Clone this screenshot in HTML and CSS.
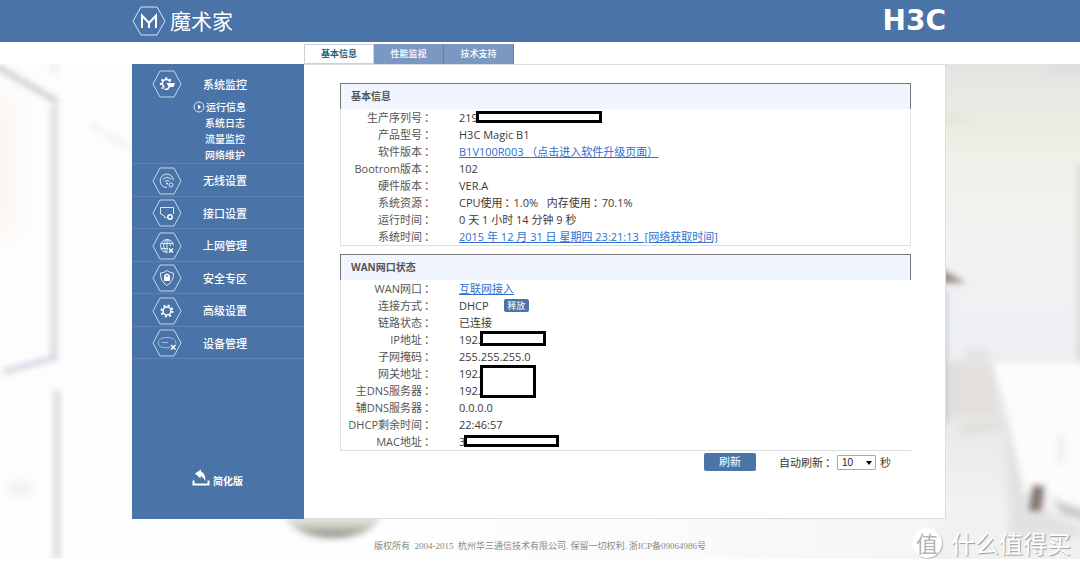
FILE: index.html
```
<!DOCTYPE html>
<html lang="zh-CN">
<head>
<meta charset="utf-8">
<title>魔术家</title>
<link rel="stylesheet" href="styles.css">
</head>
<body>
<header class="top">
  <div class="wrap top-row">
    <a class="brand" href="#">
      <svg class="brand-mark" viewBox="0 0 34 30" aria-hidden="true">
        <path class="thin" d="M1 15 9 1H25L33 15 25 29H9Z"/>
        <path class="bold" d="M10 22V9.500L17 17 24 9.500V22M17 17V22"/>
      </svg>
      <span class="brand-name">魔术家</span>
    </a>
    <span class="vendor">H3C</span>
  </div>
</header>

<nav class="wrap tabs">
  <a class="tab active" href="#">基本信息</a>
  <a class="tab" href="#">性能监视</a>
  <a class="tab" href="#">技术支持</a>
</nav>

<div class="stage">
  <svg class="scene" viewBox="0 0 1080 495" preserveAspectRatio="none" aria-hidden="true">
    <defs>
      <linearGradient id="wall" x1="0" y1="0" x2="0" y2="1">
        <stop offset="0" stop-color="#e3e4e2"/>
        <stop offset="0.080" stop-color="#e9e9e4"/>
        <stop offset="0.120" stop-color="#ecebdf"/>
        <stop offset="0.220" stop-color="#f1f0ea"/>
        <stop offset="0.400" stop-color="#f2f2f2"/>
        <stop offset="0.600" stop-color="#eff0f4"/>
        <stop offset="0.780" stop-color="#e9e9ea"/>
        <stop offset="0.900" stop-color="#eeeeee"/>
        <stop offset="1" stop-color="#f4f4f4"/>
      </linearGradient>
      <linearGradient id="floor" x1="0" y1="0" x2="1" y2="0">
        <stop offset="0" stop-color="#fefefe"/>
        <stop offset="0.400" stop-color="#fbfbfb"/>
        <stop offset="1" stop-color="#f3f3f3"/>
      </linearGradient>
      <linearGradient id="bowl" x1="0" y1="0" x2="0" y2="1">
        <stop offset="0.500" stop-color="#efefea"/>
        <stop offset="0.720" stop-color="#d4d4cc"/>
        <stop offset="1" stop-color="#85857d"/>
      </linearGradient>
      <filter id="b2" x="-50%" y="-50%" width="200%" height="200%"><feGaussianBlur stdDeviation="2"/></filter>
      <filter id="b3" x="-50%" y="-50%" width="200%" height="200%"><feGaussianBlur stdDeviation="3"/></filter>
      <filter id="b4" x="-50%" y="-50%" width="200%" height="200%"><feGaussianBlur stdDeviation="4"/></filter>
      <filter id="b12" x="-100%" y="-100%" width="300%" height="300%"><feGaussianBlur stdDeviation="12"/></filter>
    </defs>
    <rect width="1080" height="495" fill="#fdfdfd"/>
    <rect x="-10" y="30" width="22" height="140" fill="#fdf1e9" filter="url(#b12)"/>
    <g filter="url(#b3)">
      <path d="M54 42V294M57 326V495" fill="none" stroke="#d6d6d6" stroke-width="6"/>
      <path d="M-4 2 20 16 58 38" fill="none" stroke="#c6c8c8" stroke-width="5"/>
      <path d="M3 308 58 293" fill="none" stroke="#d0d3df" stroke-width="5"/>
      <path d="M90 60 134 86" fill="none" stroke="#f3f3f3" stroke-width="6"/>
      <path d="M54 -2V10" fill="none" stroke="#eeeeee" stroke-width="7"/>
    </g>
    <rect x="8" y="418" width="24" height="14" fill="#f3f3f3" filter="url(#b4)"/>
    <rect x="340" y="455" width="740" height="40" fill="url(#floor)"/>
    <ellipse cx="333" cy="450" rx="48" ry="24" fill="url(#bowl)" filter="url(#b3)"/>
    <rect x="945" width="135" height="455" fill="url(#wall)"/>
    <g filter="url(#b4)">
      <path d="M944 450H1090V500H920Z" fill="#f1f1f1"/>
      <ellipse cx="1070" cy="4" rx="26" ry="6" fill="#dcdedd"/>
      <ellipse cx="955" cy="56" rx="20" ry="3" fill="#e4e3d6"/>
      <path d="M940 298H992L1001 352H940Z" fill="#e2dfdc"/>
      <rect x="966" y="284" width="22" height="24" fill="#e5e3e1"/>
      <path d="M960 360 1001 356V366L962 372Z" fill="#e0dfd9"/>
      <path d="M1003 350 1030 440 1080 462V475H1010Z" fill="#e2e2e2"/>
    </g>
    <g filter="url(#b3)">
      <path d="M940 204 966 219 940 219Z" fill="#958e88"/>
      <path d="M944 228V360" stroke="#b9c4d0" stroke-width="5"/>
      <path d="M1080 100V298" stroke="#d0ceca" stroke-width="4"/>
      <path d="M994 299H1090V448L1048 428 1025 428Q1016 380 994 299Z" fill="#fcfcfc"/>
      <path d="M1061 370V400" stroke="#f1f1ef" stroke-width="8"/>
      <path d="M1054 436 1090 448V458L1062 450Z" fill="#cacac8"/>
      <path d="M1032 421H1045L1041 447H1029Z" fill="#84776f"/>
    </g>
  </svg>

  <div class="wrap shell">
    <aside class="side">
      <div class="group">
        <a class="item" href="#">
          <svg class="hex" viewBox="0 0 30 28" aria-hidden="true">
            <path class="frame" d="M1 14 8 1H22L29 14 22 27H8Z"/>
            <path class="line2" d="M12.500 17A4 4 0 1 1 18 12"/>
            <path class="teeth" d="M11.500 18.500A5.500 5.500 0 1 1 19.500 12"/>
            <path class="fill" d="M14.500 13H23L21.500 17H18L16 20H12.500V18.500H15L16.500 16.500Z"/>
          </svg>
          <span>系统监控</span>
        </a>
        <ul class="sub">
          <li><a class="current" href="#"><svg class="play" viewBox="0 0 12 12" aria-hidden="true"><circle class="ring" cx="6" cy="6" r="5"/><path class="fill" d="M5 3.500 8 6 5 8.500Z"/></svg>运行信息</a></li>
          <li><a href="#">系统日志</a></li>
          <li><a href="#">流量监控</a></li>
          <li><a href="#">网络维护</a></li>
        </ul>
      </div>
      <div class="menu">
        <a class="item" href="#">
          <svg class="hex" viewBox="0 0 30 28" aria-hidden="true">
            <path class="frame" d="M1 14 8 1H22L29 14 22 27H8Z"/>
            <path class="line" d="M15 20.500A6.700 6.700 0 1 1 21.500 13.500M10.500 12.500Q15 8.500 19.500 12.500M12.500 14.500Q15 12.300 17.500 14.500"/>
            <circle class="fill" cx="15" cy="16.500" r="0.900"/>
            <circle class="line" cx="19" cy="18" r="2"/>
          </svg>
          <span>无线设置</span>
        </a>
        <a class="item" href="#">
          <svg class="hex" viewBox="0 0 30 28" aria-hidden="true">
            <path class="frame" d="M1 14 8 1H22L29 14 22 27H8Z"/>
            <path class="line" d="M14.500 18.500 12.500 18.500V17L8.500 15V8.500H21.500V15"/>
            <circle class="line2" cx="18" cy="18" r="2.200"/>
          </svg>
          <span>接口设置</span>
        </a>
        <a class="item" href="#">
          <svg class="hex" viewBox="0 0 30 28" aria-hidden="true">
            <path class="frame" d="M1 14 8 1H22L29 14 22 27H8Z"/>
            <path class="line" d="M15.500 20.500A6.500 6.500 0 1 1 21.500 13.500M9 11.500H21M9 16.500H16M15 7.500V20M14.500 7.500Q8.500 14 14.500 20.500M15.500 7.500Q19 10.500 18.500 14.500"/>
            <path class="line2" d="M17 16.500 21 20.500M21 16.500 17 20.500"/>
          </svg>
          <span>上网管理</span>
        </a>
        <a class="item" href="#">
          <svg class="hex" viewBox="0 0 30 28" aria-hidden="true">
            <path class="frame" d="M1 14 8 1H22L29 14 22 27H8Z"/>
            <path class="line" d="M15 6.500Q18 9 21.500 9Q22 17 15 21.500Q8 17 8.500 9Q12 9 15 6.500Z"/>
            <path class="line2" d="M13 13V11.500Q15 8.800 17 11.500V13"/>
            <rect class="fill" x="12" y="12.500" width="6" height="4.500"/>
          </svg>
          <span>安全专区</span>
        </a>
        <a class="item" href="#">
          <svg class="hex" viewBox="0 0 30 28" aria-hidden="true">
            <path class="frame" d="M1 14 8 1H22L29 14 22 27H8Z"/>
            <circle class="line2" cx="15" cy="14" r="4"/>
            <circle class="teeth" cx="15" cy="14" r="5.500"/>
          </svg>
          <span>高级设置</span>
        </a>
        <a class="item" href="#">
          <svg class="hex" viewBox="0 0 30 28" aria-hidden="true">
            <path class="frame" d="M1 14 8 1H22L29 14 22 27H8Z"/>
            <path class="line dim" d="M18 18.500Q6.500 20 6 14Q6.500 8.500 15 8.500Q23.500 8.500 24 14V15.500M9.500 13.500H16"/>
            <path class="line2" d="M19 16 23.500 20.500M23.500 16 19 20.500"/>
          </svg>
          <span>设备管理</span>
        </a>
      </div>
      <a class="simple" href="#">
        <svg class="exit" viewBox="0 0 18 17" aria-hidden="true">
          <path class="tray" d="M1.500 11.500V15.500H16.500V11.500"/>
          <path class="fill" d="M3 4.500 9 0.500V2.500Q13.500 4 13.500 12.500Q11.500 8 8.500 7V9.500Z"/>
        </svg>
        <span>简化版</span>
      </a>
    </aside>

    <main class="content">
      <section class="card">
        <h2>基本信息</h2>
        <dl>
          <dt>生产序列号<i>：</i></dt><dd>219<span class="mask mask-serial"></span></dd>
          <dt>产品型号<i>：</i></dt><dd>H3C Magic B1</dd>
          <dt>软件版本<i>：</i></dt><dd><a href="#">B1V100R003 （点击进入软件升级页面）</a></dd>
          <dt>Bootrom版本<i>：</i></dt><dd>102</dd>
          <dt>硬件版本<i>：</i></dt><dd>VER.A</dd>
          <dt>系统资源<i>：</i></dt><dd>CPU使用<i>：</i>1.0% &nbsp; 内存使用<i>：</i>70.1%</dd>
          <dt>运行时间<i>：</i></dt><dd>0 天 1 小时 14 分钟 9 秒</dd>
          <dt>系统时间<i>：</i></dt><dd><a href="#">2015 年 12 月 31 日 星期四 23:21:13 &nbsp;[网络获取时间]</a></dd>
        </dl>
      </section>
      <section class="card open">
        <h2>WAN网口状态</h2>
        <dl>
          <dt>WAN网口<i>：</i></dt><dd><a href="#">互联网接入</a></dd>
          <dt>连接方式<i>：</i></dt><dd>DHCP<button class="release" type="button">释放</button></dd>
          <dt>链路状态<i>：</i></dt><dd>已连接</dd>
          <dt>IP地址<i>：</i></dt><dd>192.<span class="mask mask-ip"></span></dd>
          <dt>子网掩码<i>：</i></dt><dd>255.255.255.0</dd>
          <dt>网关地址<i>：</i></dt><dd>192.</dd>
          <dt>主DNS服务器<i>：</i></dt><dd>192.<span class="mask mask-dns"></span></dd>
          <dt>辅DNS服务器<i>：</i></dt><dd>0.0.0.0</dd>
          <dt>DHCP剩余时间<i>：</i></dt><dd>22:46:57</dd>
          <dt>MAC地址<i>：</i></dt><dd>3<span class="mask mask-mac"></span></dd>
        </dl>
      </section>
      <form class="refresh">
        <button class="go" type="button">刷新</button>
        <label for="period">自动刷新<i>：</i></label>
        <span class="pick"><select id="period"><option>10</option><option>20</option><option>30</option></select></span>
        <span class="unit">秒</span>
      </form>
    </main>
  </div>

  <footer class="foot">版权所有 &nbsp;2004-2015 &nbsp;杭州华三通信技术有限公司. 保留一切权利. 浙ICP备09064986号</footer>
  <div class="stamp"><span class="stamp-dot">值</span><span>什么值得买</span></div>
</div>
</body>
</html>
```
FILE: styles.css
```
* { box-sizing: border-box; }

body {
  margin: 0;
  background: #fff;
  color: #3a3a3a;
  font: 11px/17px "Open Sans", "Noto Sans CJK SC", sans-serif;
}

a { color: inherit; text-decoration: none; }
i { margin-right: -2px; padding-left: 2px; font-style: normal; }

.wrap {
  width: 100%;
  max-width: 816px;
  margin: 0 auto;
  padding-right: 2px;
}

.top { background: #4a73a7; color: #fff; }
.top-row {
  display: flex;
  align-items: center;
  justify-content: space-between;
  height: 42px;
}
.brand { display: flex; align-items: center; gap: 4px; }
.brand-mark { width: 34px; height: 30px; fill: none; stroke: #fff; }
.thin { stroke-width: 1; stroke: #d5e4f3; }
.bold { stroke-width: 2; }
.brand-name { font: 21px/28px "Noto Sans CJK SC", sans-serif; padding-bottom: 2px; }
.vendor { font: bold 28px/30px "DejaVu Sans", sans-serif; }

.tabs {
  display: flex;
  align-items: flex-end;
  height: 22px;
  padding-left: 172px;
}
.tab {
  width: 70px;
  height: 20px;
  border-right: 1px solid #5e7fb0;
  background: #7b98c3;
  color: #fff;
  font-size: 9px;
  font-weight: 500;
  line-height: 19px;
  text-align: center;
}
.tab.active {
  border: 1px solid #c9d1dd;
  background: #fff;
  color: #15607f;
  font-weight: 700;
  line-height: 18px;
}

.stage { position: relative; }
.scene { position: absolute; inset: 0; width: 100%; height: 100%; }
.shell {
  position: relative;
  display: flex;
  min-height: 455px;
}

.side {
  display: flex;
  flex-direction: column;
  flex: 0 0 172px;
  background: #4a73a7;
  color: #fff;
  font-weight: 500;
}
.group { padding-top: 6px; border-bottom: 1px solid #5f85b5; }
.menu {
  display: grid;
  grid-auto-rows: 1fr;
  min-height: 195px;
}
.menu .item { padding-top: 2px; border-bottom: 1px solid #5f85b5; }
.item {
  display: flex;
  align-items: center;
  gap: 21px;
  padding-left: 20px;
}
.hex { width: 30px; height: 28px; fill: none; stroke: #fff; }
.frame { stroke: #c2d8ee; }
.line { stroke: #dbe8f5; }
.dim { stroke: #9db9d8; }
.line2 { stroke: #fff; stroke-width: 1.500; }
.teeth { stroke: #fff; stroke-width: 2; stroke-dasharray: 2 2.320; }
.fill { fill: #fff; stroke: none; }

.sub { margin: 0; padding: 1px 0 0 73px; list-style: none; font-size: 10px; line-height: 16px; }
.sub a { display: block; }
.sub .current { display: flex; align-items: center; gap: 1px; margin-left: -12px; }
.play { width: 12px; height: 12px; }
.ring { fill: none; stroke: #dbe8f5; }

.simple {
  display: flex;
  align-items: flex-end;
  gap: 3px;
  margin-top: auto;
  padding: 0 0 29px 60px;
  font-weight: 700;
  font-size: 10px;
}
.exit { width: 18px; height: 17px; margin-bottom: 4px; }
.tray { fill: none; stroke: #fff; stroke-width: 2; }

.content {
  flex: 1;
  min-width: 0;
  padding: 18px 34px 0 36px;
  border: solid #ddd;
  border-width: 1px 1px 1px 0;
  background: #fff;
}
.card {
  margin-bottom: 8px;
  border-bottom: 1px solid #ddd;
}
.card.open { margin-bottom: 2px; }
.card h2 {
  margin: 0;
  padding-left: 10px;
  border: solid #777;
  border-width: 1px 1px 0;
  background: #f0f5fe;
  color: #555;
  font-size: 10px;
  font-weight: 700;
  line-height: 25px;
}
.card dl {
  display: grid;
  grid-template-columns: 92px 1fr;
  column-gap: 26px;
  margin: 0;
  border: solid #e4e4e4;
  border-width: 0 1px;
}
.card.open dl { border-right: 0; }
.card dt { text-align: right; color: #555; white-space: nowrap; height: 17px; }
.card dd { position: relative; margin: 0; height: 17px; }
.card dd a { color: #2e6fd0; text-decoration: underline; }

.mask { position: absolute; border: 3px solid #000; background: #fff; }
.mask-serial { left: 17px; top: 2px; width: 126px; height: 12px; }
.mask-ip { left: 21px; top: 0; width: 66px; height: 15px; }
.mask-dns { left: 21px; top: -17px; width: 56px; height: 33px; }
.mask-mac { left: 5px; top: 2px; width: 95px; height: 12px; }

button {
  padding: 0;
  border: 0;
  border-radius: 2px;
  background: #4a73a7;
  color: #fff;
  font-family: inherit;
}
.release { width: 25px; height: 13px; margin-left: 15px; font-size: 9px; line-height: 13px; vertical-align: 1px; }

.refresh {
  display: flex;
  align-items: center;
  justify-content: flex-end;
  padding-right: 20px;
  white-space: nowrap;
}
.go { width: 52px; height: 18px; margin-right: 23px; font-size: 11px; line-height: 18px; }
.pick { position: relative; display: flex; margin: 0 4px 0 3px; }
.pick::after {
  content: "";
  position: absolute;
  right: 4px;
  top: 6px;
  border: solid transparent;
  border-width: 4px 3px 0;
  border-top-color: #000;
  pointer-events: none;
}
.pick select {
  appearance: none;
  width: 39px;
  height: 15px;
  padding: 0 0 0 4px;
  border: 1px solid #aaa;
  border-radius: 1px;
  background: #fff;
  color: #222;
  font: 10px/13px "Liberation Sans", sans-serif;
}

.foot {
  position: relative;
  height: 40px;
  padding-top: 18px;
  color: #8a8a8a;
  font: 9px/18px "Liberation Serif", "Noto Sans CJK SC", serif;
  text-align: center;
}

.stamp {
  position: absolute;
  right: 9px;
  bottom: 0;
  display: flex;
  align-items: center;
  gap: 9px;
  color: #fff;
  font: 24px/32px "Noto Sans CJK SC", sans-serif;
  text-shadow: 1px 1px 1px #999;
}
.stamp-dot {
  width: 30px;
  height: 30px;
  border-radius: 50%;
  background: #fff;
  box-shadow: 1px 1px 1px #bbb;
  color: #b5b5b5;
  font-size: 22px;
  line-height: 29px;
  text-align: center;
  text-shadow: none;
}
```
